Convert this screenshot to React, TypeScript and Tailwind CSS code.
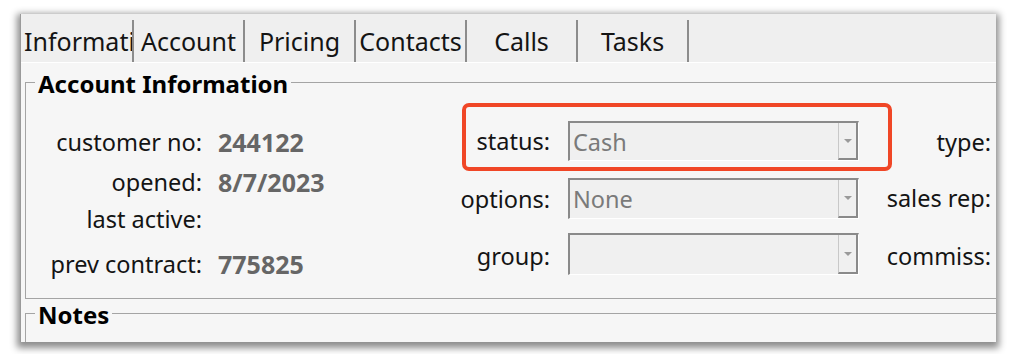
import React from "react";

const tabs = ["Informati", "Account", "Pricing", "Contacts", "Calls", "Tasks"];

const ComboBox = ({ value, h }: { value?: string; h: string }) => (
  <div className={`flex w-[291px] ${h} bg-[#f0f0f0] border-t-2 border-l-2 border-t-[#8a8a8a] border-l-[#8a8a8a] border-b border-r border-b-white border-r-white`}>
    <div className="flex-1 flex items-center pl-[3px] pt-[2px] text-[#7a7a7a] overflow-hidden whitespace-nowrap">
      {value}
    </div>
    <div className="w-[20px] flex items-center justify-center border-l border-l-[#c8c8c8] border-r-2 border-b-2 border-r-[#8a8a8a] border-b-[#8a8a8a] bg-[#f0f0f0]">
      <span className="w-0 h-0 border-l-[4px] border-r-[4px] border-t-[4px] border-l-transparent border-r-transparent border-t-[#9a9a9a]" />
    </div>
  </div>
);

export default function App() {
  return (
    <div className="w-[1016px] h-[354px] bg-white pt-[14px] pl-[20px] font-['Noto_Sans',sans-serif] text-[23.5px] text-[#141414] overflow-hidden">
      <div className="w-[976px] h-[328px] bg-[#f6f6f6] flex flex-col overflow-hidden border-l border-[#9a9a9a] shadow-[0_3px_7px_3px_rgba(0,0,0,0.45)]">
        {/* tab strip */}
        <div className="h-[48px] bg-[#efefef] flex items-end shrink-0">
          {tabs.map((t, i) => (
            <div
              key={t}
              className={`h-[42px] flex items-center pt-[2px] overflow-hidden whitespace-nowrap border-r-2 border-r-[#8c8c8c] text-[25px] ${
                i === 0 ? "w-[113px] justify-start pl-[3px]" : "w-[111px] justify-center"
              }`}
            >
              {t}
            </div>
          ))}
        </div>
        <div className="h-px bg-white shrink-0" />

        {/* panel */}
        <div className="flex-1 flex flex-col pt-[19px] pl-[4px]">
          {/* Account Information group */}
          <div className="h-[217px] border-t border-l border-b border-[#a4a4a4] flex flex-col shrink-0">
            <div className="-mt-[16px] h-[32px] ml-[9px] w-fit px-[3px] bg-[#f6f6f6] flex items-center pt-[2px] font-bold text-[24px] text-black">
              Account Information
            </div>
            <div className="flex items-start">
              {/* left column */}
              <div className="w-[414px] flex flex-col mt-[24px]">
                {[
                  ["customer no:", "244122", "h-[40px]"],
                  ["opened:", "8/7/2023", "h-[40px]"],
                  ["last active:", "", "h-[34px]"],
                  ["prev contract:", "775825", "h-[56px]"],
                ].map(([label, value, h]) => (
                  <div key={label} className={`flex items-center ${h}`}>
                    <div className="w-[176px] text-right whitespace-nowrap">{label}</div>
                    <div className="ml-[16px] font-bold text-[25px] text-[#666666]">{value}</div>
                  </div>
                ))}
              </div>

              {/* middle column */}
              <div className="flex flex-col mt-[22px]">
                <div className="relative flex items-center">
                  <div className="w-[110px] text-right pt-[2px]">status:</div>
                  <div className="ml-[18px]">
                    <ComboBox value="Cash" h="h-[40px]" />
                  </div>
                  <div className="absolute left-[22px] -right-[33px] -top-[18px] -bottom-[10px] border-[4px] border-[#f04626] rounded-[7px]" />
                </div>
                <div className="flex items-center mt-[17px]">
                  <div className="w-[110px] text-right pt-[2px]">options:</div>
                  <div className="ml-[18px]">
                    <ComboBox value="None" h="h-[41px]" />
                  </div>
                </div>
                <div className="flex items-center mt-[14px]">
                  <div className="w-[110px] text-right pt-[6px]">group:</div>
                  <div className="ml-[18px]">
                    <ComboBox h="h-[42px]" />
                  </div>
                </div>
              </div>

              {/* right column */}
              <div className="w-[132px] flex flex-col mt-[22px] text-right whitespace-nowrap">
                <div className="h-[40px] flex items-center justify-end pt-[4px]">type:</div>
                <div className="h-[41px] mt-[17px] flex items-center justify-end">sales rep:</div>
                <div className="h-[42px] mt-[14px] flex items-center justify-end pt-[6px]">commiss:</div>
              </div>
            </div>
          </div>

          {/* Notes group */}
          <div className="mt-[14px] flex-1 border-t border-l border-[#a4a4a4]">
            <div className="-mt-[14px] h-[28px] ml-[9px] w-fit px-[3px] bg-[#f6f6f6] flex items-center pt-[2px] font-bold text-[24px] text-black">
              Notes
            </div>
          </div>
        </div>
      </div>
    </div>
  );
}
